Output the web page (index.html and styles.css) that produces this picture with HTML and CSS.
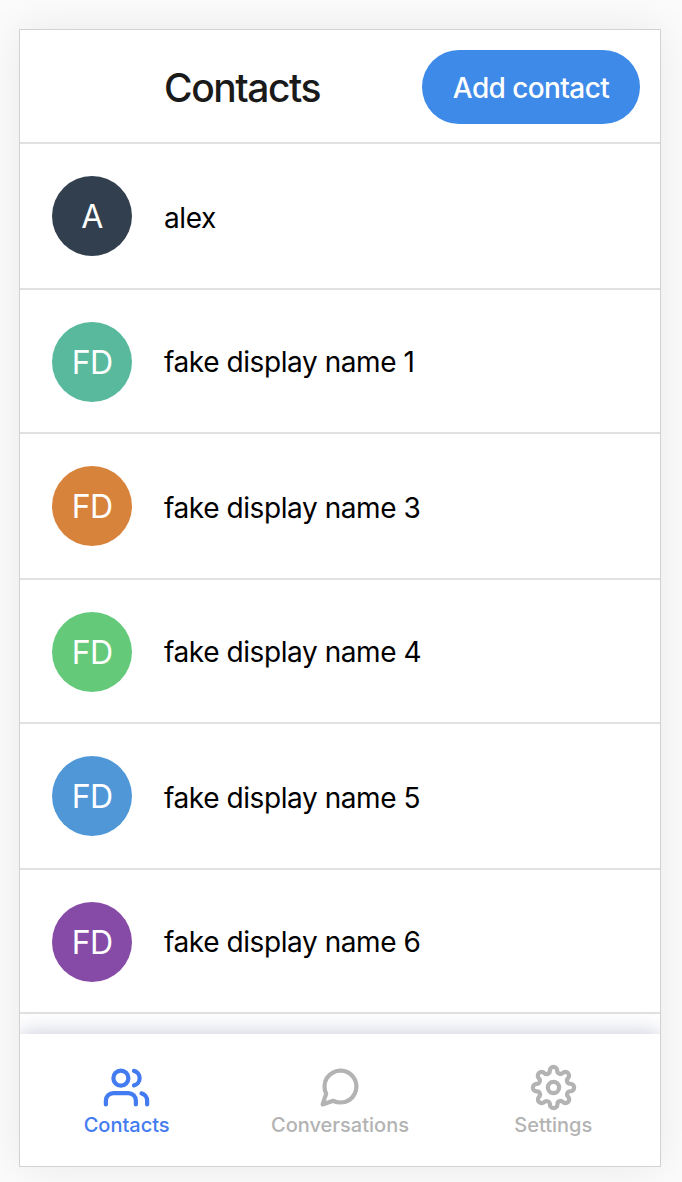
FILE: index.html
```
<!DOCTYPE html>
<html lang="en">
<head>
<meta charset="utf-8">
<title>Contacts</title>
<link rel="stylesheet" href="styles.css">
</head>
<body>
<div class="app">
  <header class="header">
    <h1 class="title">Contacts</h1>
    <button class="add-button" type="button">Add contact</button>
  </header>
  <ul class="contacts">
    <li class="contact"><span class="avatar avatar-navy">A</span><span class="name name-short">alex</span></li>
    <li class="contact"><span class="avatar avatar-teal">FD</span><span class="name">fake display name 1</span></li>
    <li class="contact"><span class="avatar avatar-orange">FD</span><span class="name">fake display name 3</span></li>
    <li class="contact"><span class="avatar avatar-green">FD</span><span class="name">fake display name 4</span></li>
    <li class="contact"><span class="avatar avatar-blue">FD</span><span class="name">fake display name 5</span></li>
    <li class="contact"><span class="avatar avatar-purple">FD</span><span class="name">fake display name 6</span></li>
  </ul>
  <nav class="tabs">
    <a class="tab tab-active">
      <svg class="icon" viewBox="0 0 24 24"><path d="M17 21v-2a4 4 0 0 0-4-4H5a4 4 0 0 0-4 4v2"/><circle cx="9" cy="7" r="4"/><path d="M23 21v-2a4 4 0 0 0-3-3.87"/><path d="M16 3.13a4 4 0 0 1 0 7.75"/></svg>
      <span class="label">Contacts</span>
    </a>
    <a class="tab">
      <svg class="icon" viewBox="0 0 24 24"><path d="M21 11.5a8.38 8.38 0 0 1-.9 3.8 8.5 8.5 0 0 1-7.6 4.7 8.38 8.38 0 0 1-3.8-.9L3 21l1.9-5.7a8.38 8.38 0 0 1-.9-3.8 8.5 8.5 0 0 1 4.7-7.6 8.38 8.38 0 0 1 3.8-.9h.5a8.48 8.48 0 0 1 8 8v.5z"/></svg>
      <span class="label">Conversations</span>
    </a>
    <a class="tab">
      <svg class="icon" viewBox="0 0 24 24"><circle cx="12" cy="12" r="3"/><path d="M19.4 15a1.65 1.65 0 0 0 .33 1.82l.06.06a2 2 0 0 1 0 2.83 2 2 0 0 1-2.83 0l-.06-.06a1.65 1.65 0 0 0-1.82-.33 1.65 1.65 0 0 0-1 1.51V21a2 2 0 0 1-2 2 2 2 0 0 1-2-2v-.09A1.65 1.65 0 0 0 9 19.4a1.65 1.65 0 0 0-1.82.33l-.06.06a2 2 0 0 1-2.83 0 2 2 0 0 1 0-2.83l.06-.06a1.65 1.65 0 0 0 .33-1.82 1.65 1.65 0 0 0-1.51-1H3a2 2 0 0 1-2-2 2 2 0 0 1 2-2h.09A1.65 1.65 0 0 0 4.6 9a1.65 1.65 0 0 0-.33-1.82l-.06-.06a2 2 0 0 1 0-2.83 2 2 0 0 1 2.83 0l.06.06a1.65 1.65 0 0 0 1.82.33H9a1.65 1.65 0 0 0 1-1.51V3a2 2 0 0 1 2-2 2 2 0 0 1 2 2v.09a1.65 1.65 0 0 0 1 1.51 1.65 1.65 0 0 0 1.82-.33l.06-.06a2 2 0 0 1 2.83 0 2 2 0 0 1 0 2.83l-.06.06a1.65 1.65 0 0 0-.33 1.82V9a1.65 1.65 0 0 0 1.51 1H21a2 2 0 0 1 2 2 2 2 0 0 1-2 2h-.09a1.65 1.65 0 0 0-1.51 1z"/></svg>
      <span class="label">Settings</span>
    </a>
  </nav>
</div>
</body>
</html>
```
FILE: styles.css
```
* { box-sizing: border-box; }

body {
  margin: 0;
  height: 1182px;
  padding: 29px 21px 15px 19px;
  overflow: hidden;
  background: #fbfbfb;
  font-family: Inter, sans-serif;
  color: #000;
}

.app {
  display: flex;
  flex-direction: column;
  height: 1138px;
  overflow: hidden;
  border: 1px solid #d2d2d2;
  background: #fff;
  box-shadow: 0 0 40px rgba(0, 0, 0, 0.075);
}

.header {
  flex: none;
  display: flex;
  justify-content: space-between;
  height: 114px;
  padding: 20px 20px 0 144px;
  border-bottom: 2px solid #e1e1e1;
}

.title {
  margin: 0;
  font-size: 39px;
  font-weight: 550;
  line-height: 76px;
  letter-spacing: -1.45px;
  color: #1a1a1a;
}

.add-button {
  width: 218px;
  height: 74px;
  padding: 2px 0 0;
  border: 0;
  border-radius: 37px;
  background: #3e8ae8;
  color: #fff;
  font: 550 28px Inter, sans-serif;
  letter-spacing: -0.6px;
}

.contacts {
  flex: none;
  height: 890px;
  margin: 0;
  padding: 0;
  list-style: none;
}

.contact {
  display: flex;
  gap: 32px;
  height: 144px;
  padding: 32px 32px 0;
  border-bottom: 2px solid #e1e1e1;
}

.contact:nth-child(odd) { height: 146px; }

.avatar {
  width: 80px;
  height: 80px;
  border-radius: 50%;
  color: #fff;
  font-size: 32px;
  line-height: 82px;
  letter-spacing: -0.8px;
  text-align: center;
}

.avatar-navy { background: #323f4f; }
.avatar-teal { background: #58b99d; }
.avatar-orange { background: #d8833b; }
.avatar-green { background: #65c97a; }
.avatar-blue { background: #4f97d7; }
.avatar-purple { background: #854ba6; }

.name {
  font-size: 28px;
  line-height: 81px;
  letter-spacing: -0.42px;
}

.contact:nth-child(odd) .name { line-height: 85px; }

.tabs {
  flex: none;
  position: relative;
  display: grid;
  grid-template-columns: repeat(3, 1fr);
  height: 132px;
  background: #fff;
  box-shadow: 0 -2px 20px rgba(60, 75, 120, 0.26);
}

.tab {
  display: flex;
  flex-direction: column;
  align-items: center;
  padding-top: 31px;
  color: #b3b3b3;
}

.tab-active { color: #437bf0; }

.icon {
  width: 45px;
  height: 45px;
  overflow: visible;
  fill: none;
  stroke: currentColor;
  stroke-width: 2.25;
  stroke-linecap: round;
  stroke-linejoin: round;
}

.label {
  margin-top: 3px;
  font-size: 20px;
  font-weight: 500;
  line-height: 24px;
  letter-spacing: 0;
}
```
